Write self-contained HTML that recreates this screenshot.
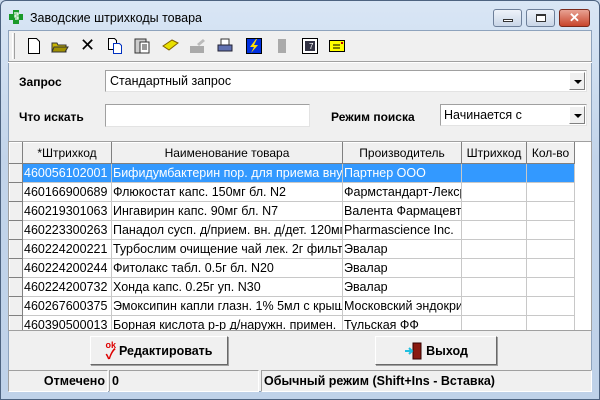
<!DOCTYPE html>
<html><head><meta charset="utf-8"><style>
*{margin:0;padding:0;box-sizing:border-box}
body{width:600px;height:400px;overflow:hidden;background:#c9d9ec;font-family:"Liberation Sans","Noto Sans CJK SC",sans-serif;font-size:12px;color:#000;position:relative}
.abs{position:absolute}
.frame{left:0;top:0;width:600px;height:400px;background:linear-gradient(#d9e6f5,#c2d4ea 40%,#bfd2e9);border:1px solid #4d6380;border-radius:6px 6px 0 0}
.client{left:8px;top:30px;width:584px;height:362px;background:#f0f0f0;border:1px solid #8ea3bd}
.title{left:30px;top:11px;font-size:12.5px;color:#000}
.wb{top:9px;height:18px;border:1px solid #6d7f99;border-radius:3px;background:linear-gradient(#eef3fa,#c9d6e7)}
.lbl{font-weight:bold;font-size:12px}
.combo{background:#fff;border:1px solid;border-color:#a0a0a0 #e3e3e3 #e3e3e3 #a0a0a0;height:22px;font-size:12.5px}
.arrow{position:absolute;right:1px;top:1px;width:16px;height:18px;background:#f0f0f0;border:1px solid;border-color:#fff #808080 #808080 #fff}
.arrow:after{content:"";position:absolute;left:4px;top:7px;border-left:4px solid transparent;border-right:4px solid transparent;border-top:4px solid #000}
table{border-collapse:collapse;table-layout:fixed;font-size:12.5px}
td,th{border:1px solid #c8c8c8;height:19px;white-space:nowrap;overflow:hidden;padding:0 1px;font-weight:normal;text-align:left}
th{background:#f0f0f0;border-color:#fff #808080 #808080 #fff;text-align:center;height:21px;font-size:12px}
td.ind{background:#f0f0f0;border-color:#fff #808080 #808080 #fff}
tr.sel td{background:#3399ff;color:#fff}
tr.sel td.ind{background:#f0f0f0}
.btn{background:#f0f0f0;border:1px solid;border-color:#fff #696969 #696969 #fff;box-shadow:1px 1px 0 #a0a0a0;font-weight:bold;font-size:12.5px;display:flex;align-items:center;justify-content:center}
.st{top:370px;height:22px;border:1px solid;border-color:#a0a0a0 #fff #fff #a0a0a0;font-weight:bold;line-height:20px;font-size:12.5px}
.ic{position:absolute;top:38px}
</style></head><body>
<div class="abs frame"></div>
<div class="abs" style="left:8px;top:9px;width:16px;height:16px">
<svg width="16" height="16"><rect x="5" y="1" width="6" height="14" fill="#1a9a2a"/><rect x="1" y="5" width="14" height="6" fill="#1a9a2a"/><path d="M6 4h4v2h-3v2h3v2h-3" stroke="#fff" fill="none" stroke-width="1.3"/></svg></div>
<div class="abs title">Заводские штрихкоды товара</div>
<div class="abs wb" style="left:493px;width:29px"><div style="position:absolute;left:9px;top:9px;width:10px;height:3px;background:#fff;border:1px solid #333"></div></div>
<div class="abs wb" style="left:526px;width:29px"><div style="position:absolute;left:9px;top:4px;width:10px;height:8px;border:1px solid #333;border-top-width:2px;background:#fff"></div></div>
<div class="abs wb" style="left:559px;width:31px;background:linear-gradient(#e8a293,#c8452c);border-color:#7a2a1c;color:#fff;font-weight:bold;text-align:center;line-height:15px;font-size:13px">✕</div>
<div class="abs client"></div>
<div class="abs" style="left:12px;top:33px;width:3px;height:26px;border-left:1px solid #fff;border-right:1px solid #a0a0a0"></div>
<div class="abs" style="left:8px;top:61px;width:584px;border-top:1px solid #a0a0a0;border-bottom:1px solid #fff"></div>
<svg class="ic" style="left:27px" width="14" height="16"><path d="M1.5 .5h8l3 3v12h-11z" fill="#fff" stroke="#000"/></svg>
<svg class="ic" style="left:51px" width="18" height="16"><path d="M1 5h5l1 2h8v7H1z" fill="#c8b400" stroke="#333"/><path d="M3 9h14l-3 5H1z" fill="#a09000" stroke="#333"/></svg>
<div class="ic" style="left:80px;top:35px;font-size:18px">✕</div>
<svg class="ic" style="left:107px" width="16" height="16"><path d="M1.5 .5h6l2 2v9h-8z" fill="#fff" stroke="#000"/><path d="M6.5 5.5h6l2 2v8h-8z" fill="#fff" stroke="#0030c0"/></svg>
<svg class="ic" style="left:134px" width="16" height="16"><rect x="1" y="1" width="11" height="14" fill="#ccc" stroke="#333"/><rect x="6" y="4" width="9" height="11" fill="#fff" stroke="#333"/><path d="M8 7h5M8 9h5M8 11h5" stroke="#333"/></svg>
<svg class="ic" style="left:162px" width="18" height="16"><path d="M1 8l9-6 6 3-9 7z" fill="#e8e000" stroke="#806000"/></svg>
<svg class="ic" style="left:189px" width="18" height="16"><path d="M1 8h14v7H1z" fill="#aaa"/><path d="M8 6l6-5 2 2-6 5z" fill="#bbb"/></svg>
<svg class="ic" style="left:217px" width="16" height="16"><rect x="4" y="1" width="8" height="6" fill="#fff" stroke="#333"/><rect x="1" y="7" width="14" height="6" fill="#6070b0" stroke="#223"/></svg>
<svg class="ic" style="left:246px" width="16" height="16"><rect x=".5" y=".5" width="15" height="15" fill="#0030e0" stroke="#000"/><path d="M10 1L4 9h4l-3 6 7-8H8l3-6z" fill="#ffe000"/></svg>
<svg class="ic" style="left:275px" width="14" height="16"><path d="M3 1h8v14H3z" fill="#aaa"/></svg>
<svg class="ic" style="left:302px" width="16" height="16"><rect x=".5" y=".5" width="15" height="15" fill="#fff" stroke="#000"/><rect x="3" y="3" width="10" height="10" fill="#334"/><text x="7" y="11" font-size="8" fill="#fff">7</text></svg>
<svg class="ic" style="left:329px;top:40px" width="16" height="12"><rect x=".5" y=".5" width="15" height="11" fill="#ffff00" stroke="#000"/><path d="M4 5h7M4 8h7" stroke="#000"/><rect x="12" y="2" width="2" height="2" fill="#c00000"/></svg>
<div class="abs lbl" style="left:19px;top:75px">Запрос</div>
<div class="abs combo" style="left:105px;top:70px;width:482px"><span style="position:absolute;left:4px;top:3px">Стандартный запрос</span><div class="arrow"></div></div>
<div class="abs lbl" style="left:19px;top:110px">Что искать</div>
<div class="abs combo" style="left:105px;top:104px;width:205px;height:23px"></div>
<div class="abs lbl" style="left:331px;top:110px">Режим поиска</div>
<div class="abs combo" style="left:440px;top:104px;width:147px"><span style="position:absolute;left:3px;top:3px">Начинается с</span><div class="arrow"></div></div>
<div class="abs" style="left:8px;top:141px;width:584px;height:190px;background:#fff;border:1px solid #a0a0a0;overflow:hidden">
<table style="width:565px">
<colgroup><col style="width:13px"><col style="width:89px"><col style="width:231px"><col style="width:119px"><col style="width:65px"><col style="width:48px"></colgroup>
<tr><th></th><th>*Штрихкод</th><th>Наименование товара</th><th>Производитель</th><th>Штрихкод</th><th>Кол-во</th></tr>
<tr class="sel"><td class="ind"></td><td>460056102001</td><td>Бифидумбактерин пор. для приема внутрь</td><td>Партнер ООО</td><td></td><td></td></tr>
<tr><td class="ind"></td><td>460166900689</td><td>Флюкостат капс. 150мг бл. N2</td><td>Фармстандарт-Лексредства</td><td></td><td></td></tr>
<tr><td class="ind"></td><td>460219301063</td><td>Ингавирин капс. 90мг бл. N7</td><td>Валента Фармацевтика</td><td></td><td></td></tr>
<tr><td class="ind"></td><td>460223300263</td><td>Панадол сусп. д/прием. вн. д/дет. 120мг</td><td>Pharmascience Inc.</td><td></td><td></td></tr>
<tr><td class="ind"></td><td>460224200221</td><td>Турбослим очищение чай лек. 2г фильтр</td><td>Эвалар</td><td></td><td></td></tr>
<tr><td class="ind"></td><td>460224200244</td><td>Фитолакс табл. 0.5г бл. N20</td><td>Эвалар</td><td></td><td></td></tr>
<tr><td class="ind"></td><td>460224200732</td><td>Хонда капс. 0.25г уп. N30</td><td>Эвалар</td><td></td><td></td></tr>
<tr><td class="ind"></td><td>460267600375</td><td>Эмоксипин капли глазн. 1% 5мл с крышкой</td><td>Московский эндокринный</td><td></td><td></td></tr>
<tr><td class="ind"></td><td>460390500013</td><td>Борная кислота р-р д/наружн. примен.</td><td>Тульская ФФ</td><td></td><td></td></tr>
</table></div>
<div class="abs btn" style="left:90px;top:336px;width:138px;height:29px"><span style="color:#d00;font-size:9px;margin-right:3px;line-height:9px">ok<br><span style="font-size:14px">✓</span></span>Редактировать</div>
<div class="abs btn" style="left:375px;top:336px;width:122px;height:29px"><svg width="20" height="18" style="margin-right:2px"><rect x="9" y="1" width="8" height="16" fill="#8a1a10" stroke="#300"/><path d="M1 9h7M5 6l3 3-3 3" stroke="#20c0e0" stroke-width="2" fill="none"/></svg>Выход</div>
<div class="abs st" style="left:8px;width:100px;text-align:right;padding-right:2px">Отмечено</div>
<div class="abs st" style="left:109px;width:150px;padding-left:2px">0</div>
<div class="abs st" style="left:261px;width:331px;padding-left:2px">Обычный режим (Shift+Ins - Вставка)</div>
</body></html>
